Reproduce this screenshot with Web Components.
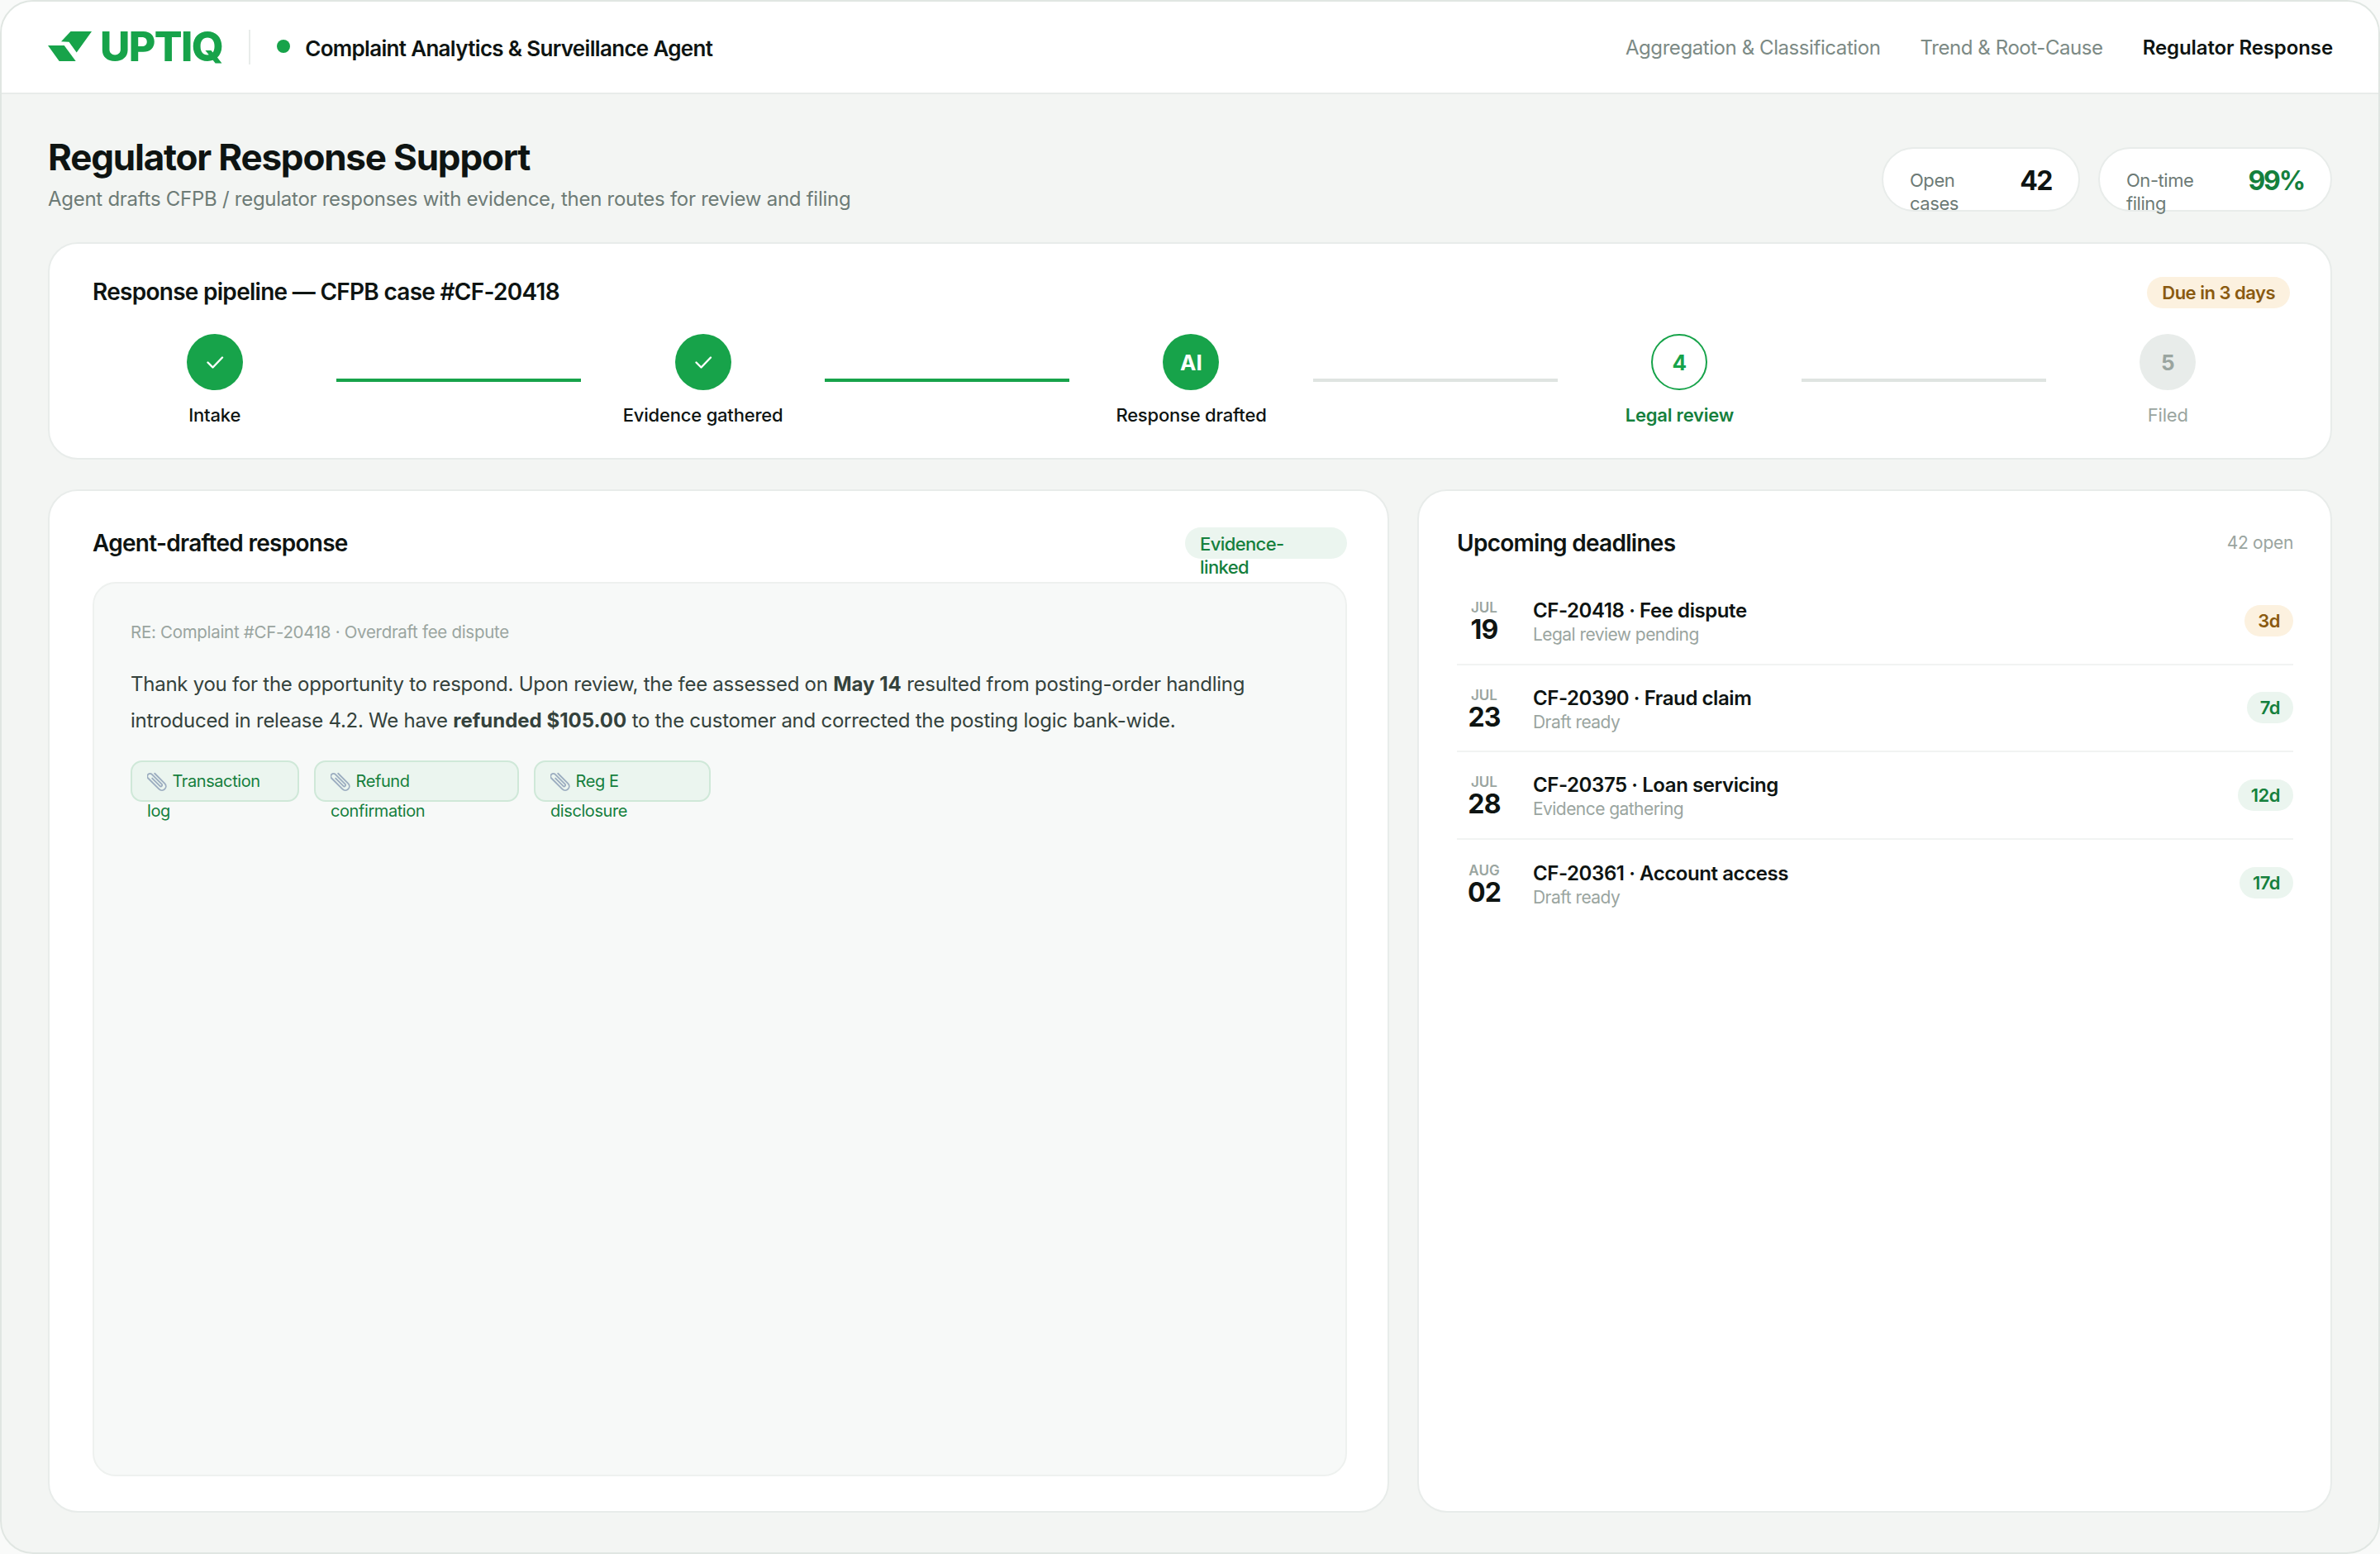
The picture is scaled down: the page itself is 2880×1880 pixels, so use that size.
<!DOCTYPE html>
<html lang="en">
<head>
<meta charset="utf-8">
<title>Regulator Response Support</title>
<style>
  html, body { margin: 0; height: 100%; background: #f9faf9; }
  body { font-family: Inter, "Liberation Sans", sans-serif; color: #0e1412; }
</style>
</head>
<body>
<app-frame>
  <top-bar slot="top"></top-bar>
  <page-head></page-head>
  <panel-card class="pipeline" heading="Response pipeline — CFPB case #CF-20418" compact>
    <status-badge slot="aside" tone="amber">Due in 3 days</status-badge>
    <step-track>
      <pipeline-step state="done" label="Intake"></pipeline-step>
      <step-line done></step-line>
      <pipeline-step state="done" label="Evidence gathered"></pipeline-step>
      <step-line done></step-line>
      <pipeline-step state="ai" mark="AI" label="Response drafted"></pipeline-step>
      <step-line></step-line>
      <pipeline-step state="current" mark="4" label="Legal review"></pipeline-step>
      <step-line></step-line>
      <pipeline-step state="todo" mark="5" label="Filed"></pipeline-step>
    </step-track>
  </panel-card>
  <split-row>
    <panel-card heading="Agent-drafted response">
      <status-badge slot="aside" tone="green" wrap>Evidence-linked</status-badge>
      <response-draft>
        <evidence-chip style="--w:204px">Transaction<br>log</evidence-chip>
        <evidence-chip style="--w:248px">Refund<br>confirmation</evidence-chip>
        <evidence-chip style="--w:214px">Reg E<br>disclosure</evidence-chip>
      </response-draft>
    </panel-card>
    <panel-card heading="Upcoming deadlines" narrow>
      <span slot="aside" style="font-size:21px;line-height:36px;color:#9aa5a0;letter-spacing:-.3px">42 open</span>
      <deadline-row month="JUL" day="19" title="CF-20418 · Fee dispute" sub="Legal review pending" left="3d" tone="amber" first></deadline-row>
      <deadline-row month="JUL" day="23" title="CF-20390 · Fraud claim" sub="Draft ready" left="7d" tone="green"></deadline-row>
      <deadline-row month="JUL" day="28" title="CF-20375 · Loan servicing" sub="Evidence gathering" left="12d" tone="green"></deadline-row>
      <deadline-row month="AUG" day="02" title="CF-20361 · Account access" sub="Draft ready" left="17d" tone="green" last></deadline-row>
    </panel-card>
  </split-row>
</app-frame>

<script>
function shadow(el, html) {
  el.attachShadow({ mode: 'open' });
  el.shadowRoot.innerHTML = html;
}

class AppFrame extends HTMLElement {
  connectedCallback() {
    shadow(this, `
      <style>
        :host { display: flex; flex-direction: column; box-sizing: border-box; width: 2880px; height: 1880px;
          background: #f3f5f3; border: 2px solid #e0e6e2; border-radius: 40px; overflow: hidden; }
        main { flex: 1; min-height: 0; display: flex; flex-direction: column; gap: 36px;
          padding: 46px 56px 48px; box-sizing: border-box; }
      </style>
      <slot name="top"></slot>
      <main><slot></slot></main>
    `);
  }
}

class TopBar extends HTMLElement {
  connectedCallback() {
    shadow(this, `
      <style>
        :host { display: flex; align-items: center; justify-content: space-between; flex: none; height: 110px;
          box-sizing: content-box; background: #fff; border-bottom: 2px solid #e8ecea; padding: 0 55px 0 56px; }
        .left, nav { display: flex; align-items: center; }
        svg { display: block; width: 54px; height: 38px; margin: -3px 9px 0 0; }
        .word { font-size: 50px; line-height: 56px; font-weight: 800; color: #17a34a; letter-spacing: -1.6px; margin-top: -3px; }
        .sep { width: 2px; height: 42px; background: #e8ecea; margin: 0 32px; margin-top: -1px; }
        .dot { width: 16px; height: 16px; border-radius: 50%; background: #17a34a; margin: -2px 18px 0 0; }
        .agent { font-size: 26px; font-weight: 600; letter-spacing: -0.68px; margin-top: 2px; }
        nav { gap: 48px; font-size: 24px; letter-spacing: -0.42px; color: #7c8a85; }
        nav b { font-weight: 600; color: #0e1412; letter-spacing: -0.1px; }
        nav span { font-weight: 400; }
      </style>
      <div class="left">
        <svg viewBox="58 37 54 38" aria-hidden="true"><g fill="#17a34a">
          <polygon points="85.5,38 111,38 92.7,63.5 83.5,50.7 74,50.3"/>
          <polygon points="58,55 77.7,55 91.7,74 71.7,74"/>
        </g></svg>
        <span class="word">UPTIQ</span>
        <span class="sep"></span>
        <span class="dot"></span>
        <span class="agent">Complaint Analytics &amp; Surveillance Agent</span>
      </div>
      <nav>
        <span>Aggregation &amp; Classification</span>
        <span>Trend &amp; Root-Cause</span>
        <b>Regulator Response</b>
      </nav>
    `);
  }
}

class PageHead extends HTMLElement {
  connectedCallback() {
    shadow(this, `
      <style>
        :host { display: flex; justify-content: space-between; align-items: flex-start; flex: none; margin-bottom: -4px; }
        h1 { margin: 0; font-size: 44px; line-height: 60px; font-weight: 700; letter-spacing: -1.2px; }
        p { margin: 1px 0 0; font-size: 24px; line-height: 40px; color: #6d7b76; letter-spacing: -0.27px; }
        .stats { display: flex; gap: 22px; margin-top: 18px; }
      </style>
      <div>
        <h1>Regulator Response Support</h1>
        <p>Agent drafts CFPB / regulator responses with evidence, then routes for review and filing</p>
      </div>
      <div class="stats">
        <stat-pill label="Open cases" value="42" style="--w:240px;--lw:100px"></stat-pill>
        <stat-pill label="On-time filing" value="99%" good style="--w:283px;--lw:100px"></stat-pill>
      </div>
    `);
  }
}

class StatPill extends HTMLElement {
  connectedCallback() {
    shadow(this, `
      <style>
        :host { display: flex; align-items: center; justify-content: space-between; box-sizing: border-box;
          width: var(--w); height: 78px; padding: 0 32px; background: #fff; border: 2px solid #e8ecea; border-radius: 39px; }
        .label { width: var(--lw); font-size: 22px; line-height: 28px; color: #6d7b76; letter-spacing: -0.45px; position: relative; top: 15px; }
        .value { font-size: 32px; line-height: 40px; font-weight: 700; letter-spacing: -1.5px; position: relative; top: 2px; }
        :host([good]) .value { color: #15803d; letter-spacing: -2.2px; }
      </style>
      <span class="label">${this.getAttribute('label')}</span>
      <span class="value">${this.getAttribute('value')}</span>
    `);
  }
}

class PanelCard extends HTMLElement {
  connectedCallback() {
    shadow(this, `
      <style>
        :host { display: flex; flex-direction: column; box-sizing: border-box; min-width: 0; background: #fff;
          border: 2px solid #e8ecea; border-radius: 36px; padding: 45px 49px 42px 52px; }
        :host([compact]) { flex: none; height: 263px; padding-top: 40px; padding-bottom: 0; }
        :host([narrow]) { padding-left: 46px; padding-right: 45px; }
        header { display: flex; align-items: flex-start; justify-content: space-between; height: 48px; flex: none; margin-bottom: 17px; }
        :host([compact]) header { margin-bottom: 21px; }
        h2 { margin: 0; font-size: 28px; line-height: 36px; font-weight: 600; letter-spacing: -0.72px; color: #0e1412; }
        .body { flex: 1; min-height: 0; display: flex; flex-direction: column; }
      </style>
      <header><h2>${this.getAttribute('heading')}</h2><slot name="aside"></slot></header>
      <div class="body"><slot></slot></div>
    `);
  }
}

class StatusBadge extends HTMLElement {
  connectedCallback() {
    shadow(this, `
      <style>
        :host { display: inline-block; box-sizing: border-box; height: 38px; padding: 0 18px; border-radius: 19px;
          font-size: 22px; line-height: 28px; font-weight: 600; letter-spacing: -0.5px; white-space: nowrap; }
        span { display: block; padding-top: 5px; }
        :host([tone=amber]) { background: #fcf1df; color: #8a5a10; }
        :host([tone=green]) { background: #ebf5ef; color: #15803d; }
        :host([wrap]) { width: 196px; white-space: normal; font-weight: 500; letter-spacing: -0.6px; margin-top: -1px; }
        :host([wrap]) span { padding-top: 6px; }
      </style>
      <span><slot></slot></span>
    `);
  }
}

class StepTrack extends HTMLElement {
  connectedCallback() {
    shadow(this, `
      <style>
        :host { display: flex; align-items: flex-start; }
      </style>
      <slot></slot>
    `);
  }
}

class PipelineStep extends HTMLElement {
  connectedCallback() {
    const state = this.getAttribute('state');
    const mark = state === 'done'
      ? `<svg width="24" height="24" viewBox="0 0 24 24" fill="none" stroke="#fff" stroke-width="2.4" stroke-linecap="round" stroke-linejoin="round"><path d="M3.5 12.5l6 6L21 6.5"/></svg>`
      : this.getAttribute('mark');
    shadow(this, `
      <style>
        :host { flex: 1 1 0; min-width: 0; display: flex; flex-direction: column; align-items: center; gap: 10px; }
        .dot { box-sizing: border-box; width: 68px; height: 68px; border-radius: 50%; display: flex; align-items: center;
          justify-content: center; font-size: 26px; font-weight: 700; background: #17a34a; color: #fff; }
        .dot svg { display: block; }
        .label { font-size: 22px; line-height: 40px; font-weight: 500; letter-spacing: -0.2px; white-space: nowrap; color: #0e1412; }
        :host([state=current]) .dot { background: #fff; border: 2px solid #17a34a; color: #17a34a; }
        :host([state=current]) .label { color: #15803d; font-weight: 600; }
        :host([state=todo]) .dot { background: #e8ecea; color: #9aa5a0; }
        :host([state=todo]) .label { color: #9aa5a0; font-weight: 400; }
      </style>
      <div class="dot">${mark}</div>
      <div class="label">${this.getAttribute('label')}</div>
    `);
  }
}

class StepLine extends HTMLElement {
  connectedCallback() {
    shadow(this, `
      <style>
        :host { flex: 1 1 0; min-width: 0; height: 4px; margin-top: 54px; background: #dfe4e1; }
        :host([done]) { background: #17a34a; }
      </style>
    `);
  }
}

class ResponseDraft extends HTMLElement {
  connectedCallback() {
    shadow(this, `
      <style>
        :host { flex: 1; min-height: 0; display: block; box-sizing: border-box; background: #f7f9f8; border: 2px solid #eef1ef;
          border-radius: 28px; padding: 41px 44px; }
        .re { font-size: 20.5px; line-height: 36px; color: #9aa5a0; letter-spacing: -0.3px; margin-bottom: 23px; }
        p { margin: 0 0 26px; font-size: 24px; line-height: 44px; color: #34423c; letter-spacing: -0.26px; }
        b { font-weight: 700; letter-spacing: 0; }
        .chips { display: flex; gap: 18px; }
      </style>
      <div class="re">RE: Complaint #CF-20418 · Overdraft fee dispute</div>
      <p>Thank you for the opportunity to respond. Upon review, the fee assessed on <b>May 14</b> resulted from posting-order handling<br>introduced in release 4.2. We have <b>refunded $105.00</b> to the customer and corrected the posting logic bank-wide.</p>
      <div class="chips"><slot></slot></div>
    `);
  }
}

class EvidenceChip extends HTMLElement {
  connectedCallback() {
    shadow(this, `
      <style>
        :host { display: block; box-sizing: border-box; width: var(--w); height: 50px; padding: 5px 18px; background: #ebf5ef;
          border: 2px solid #cfe8d8; border-radius: 14px; font-size: 20px; line-height: 36px; color: #15803d; letter-spacing: -0.42px; }
        svg { display: inline-block; vertical-align: -6px; width: 25px; height: 25px; margin-right: 5.5px; }
      </style>
      <svg viewBox="2.5 2.5 19 19" fill="none" stroke="#9cadc0" stroke-width="1.4" stroke-linecap="round"><g transform="rotate(-45 12 12)"><path d="M15.5 5v13a3.7 3.7 0 0 1-7.4 0V3.8a2.5 2.5 0 0 1 5 0V16.5a1.2 1.2 0 0 1-2.4 0V6.5"/></g></svg><slot></slot>
    `);
  }
}

class DeadlineRow extends HTMLElement {
  connectedCallback() {
    shadow(this, `
      <style>
        :host { display: flex; align-items: center; height: 105.5px; box-sizing: border-box; border-bottom: 2px solid #f1f3f2; }
        :host([first]) { margin-top: -5px; }
        :host([last]) { border-bottom: 0; }
        .date { width: 66px; flex: none; text-align: center; margin-right: 26px; margin-top: 2px; }
        .mon { font-size: 17px; line-height: 20px; font-weight: 600; color: #9aa5a0; }
        .day { font-size: 32px; line-height: 33px; font-weight: 700; letter-spacing: -0.8px; }
        .text { flex: 1; min-width: 0; margin-top: 5px; }
        .title { font-size: 24px; line-height: 30px; font-weight: 600; letter-spacing: -0.42px; }
        .sub { font-size: 21px; line-height: 28px; color: #9aa5a0; letter-spacing: -0.55px; }
        status-badge { padding: 0 16px; }
      </style>
      <div class="date"><div class="mon">${this.getAttribute('month')}</div><div class="day">${this.getAttribute('day')}</div></div>
      <div class="text"><div class="title">${this.getAttribute('title')}</div><div class="sub">${this.getAttribute('sub')}</div></div>
      <status-badge tone="${this.getAttribute('tone')}">${this.getAttribute('left')}</status-badge>
    `);
  }
}

class SplitRow extends HTMLElement {
  connectedCallback() {
    shadow(this, `
      <style>
        :host { flex: 1; min-height: 0; display: grid; grid-template-columns: 1623px 1fr; gap: 34px; }
      </style>
      <slot></slot>
    `);
  }
}

customElements.define('app-frame', AppFrame);
customElements.define('top-bar', TopBar);
customElements.define('page-head', PageHead);
customElements.define('stat-pill', StatPill);
customElements.define('panel-card', PanelCard);
customElements.define('status-badge', StatusBadge);
customElements.define('step-track', StepTrack);
customElements.define('pipeline-step', PipelineStep);
customElements.define('step-line', StepLine);
customElements.define('response-draft', ResponseDraft);
customElements.define('evidence-chip', EvidenceChip);
customElements.define('deadline-row', DeadlineRow);
customElements.define('split-row', SplitRow);
</script>
</body>
</html>
